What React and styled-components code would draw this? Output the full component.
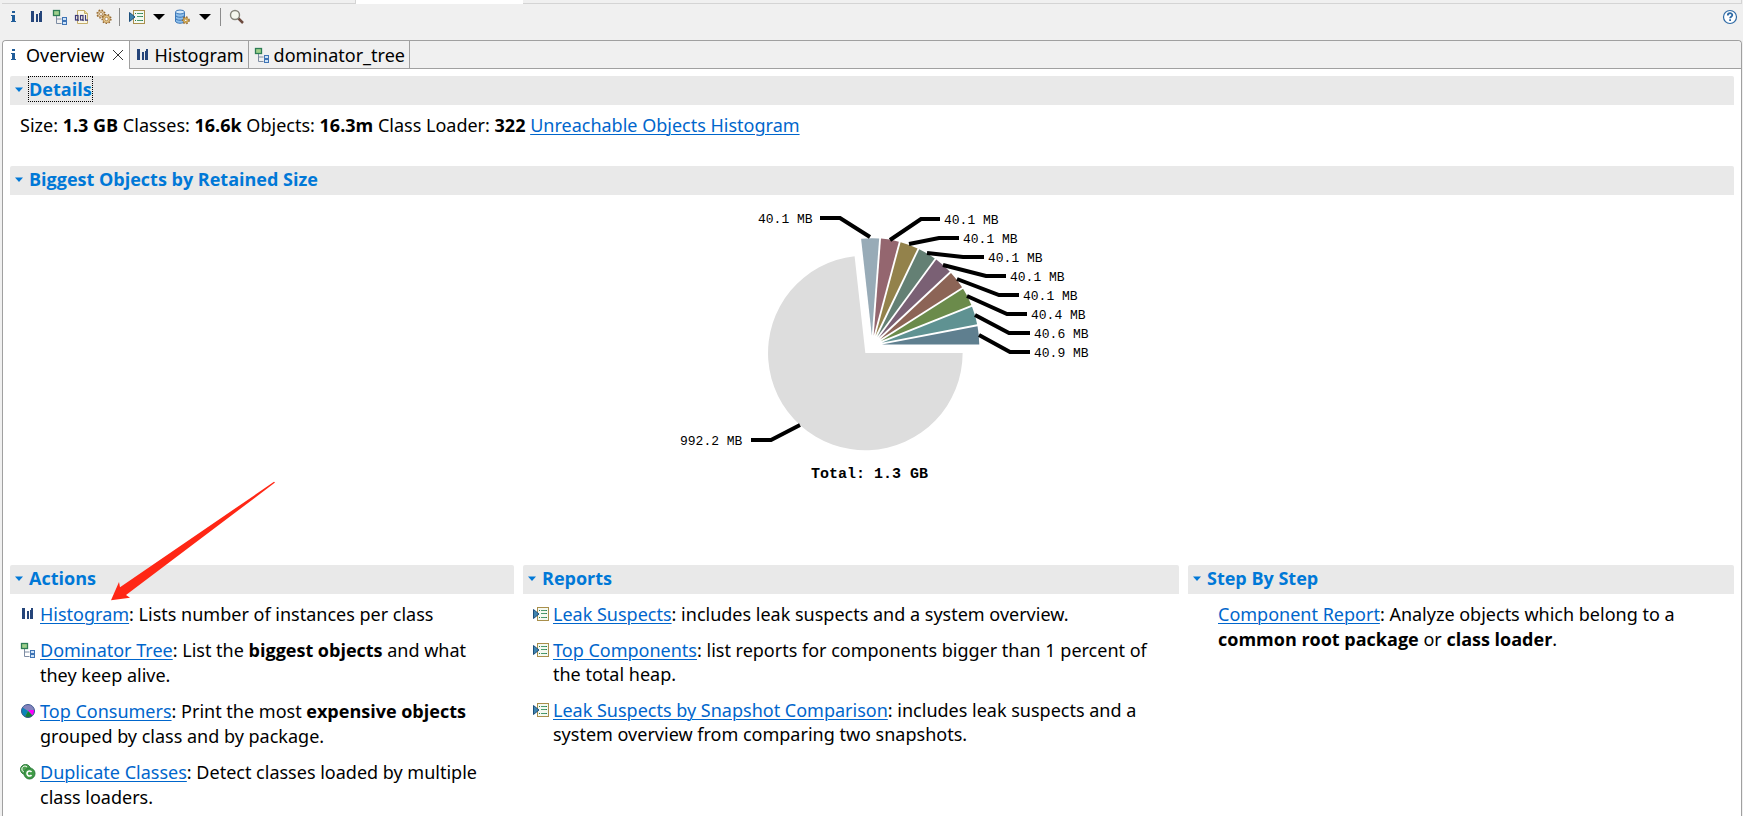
import React from 'react';
import styled, { createGlobalStyle } from 'styled-components';

const GlobalStyle = createGlobalStyle`
  * { box-sizing: border-box; }
  body { margin: 0; background: #f0f0f0; }
`;

const Workbench = styled.div`
  min-height: 100vh;
  display: flex;
  flex-direction: column;
  padding: 0 1px 0 2px;
  background: #f0f0f0;
  color: #000;
  font: 18px/24px "Noto Sans", "Open Sans", sans-serif;
`;

const EditorStrip = styled.div`
  display: grid;
  grid-template-columns: 354fr 167fr 1219fr;
  height: 4px;
`;

const StripTab = styled.div`
  background: ${(p) => (p.$active ? '#fff' : '#f0f0f0')};
  border: 0 solid #d4d4d4;
  border-width: ${(p) => (p.$active ? '0' : '0 1px 1px 0')};
`;

const Toolbar = styled.div`
  display: flex;
  align-items: center;
  height: 36px;
  padding: 0 3px 10px 2px;
`;

const ToolButton = styled.button`
  display: flex;
  align-items: center;
  justify-content: center;
  width: ${(p) => p.$width || 22}px;
  height: 22px;
  padding: 0;
  border: 0;
  background: none;
`;

const Separator = styled.span`
  width: 1px;
  height: 18px;
  margin: 0 6px 0 4px;
  background: #8c8c8c;
`;

const Spacer = styled.span`
  flex: 1;
`;

const Editor = styled.main`
  flex: 1;
  display: flex;
  flex-direction: column;
  border: 1px solid #a0a0a0;
  border-bottom: 0;
  border-radius: 4px 4px 0 0;
  background: #fff;
`;

const TabBar = styled.div`
  display: flex;
  height: 28px;
  border-radius: 4px 4px 0 0;
  background: #f0f0f0;
`;

const Tab = styled.button`
  display: flex;
  align-items: center;
  gap: 4px;
  padding: ${(p) => (p.$active ? '0 6px 0 3px' : '0 4px 0 5px')};
  border: 0 solid #a0a0a0;
  border-width: ${(p) => (p.$active ? '0 1px 0 0' : '0 1px 1px 0')};
  border-top-left-radius: ${(p) => (p.$active ? 4 : 0)}px;
  background: ${(p) => (p.$active ? '#fff' : '#f0f0f0')};
  color: #000;
  font: inherit;
`;

const CloseMark = styled.svg`
  margin-left: 4px;
`;

const TabFill = styled.div`
  flex: 1;
  border-bottom: 1px solid #a0a0a0;
`;

const Page = styled.div`
  padding: 7px 7px 0;
`;

const Section = styled.section`
  position: relative;
  min-width: 0;
  min-height: ${(p) => p.$minHeight || 0}px;
`;

const SectionHeader = styled.h2`
  display: flex;
  align-items: center;
  height: 29px;
  margin: 0;
  padding: 0 0 3px 5px;
  border-radius: 2px 2px 0 0;
  background: #e9e9e9;
  font: bold 18px/24px "Open Sans", sans-serif;
`;

const Toggle = styled.button`
  display: flex;
  align-items: center;
  gap: 6px;
  padding: 0;
  border: 0;
  background: none;
  color: #0078d7;
  font: inherit;
`;

const ToggleText = styled.span`
  outline: ${(p) => (p.$focused ? '1px dotted #000' : 'none')};
`;

const Summary = styled.p`
  margin: 0;
  padding: 8px 10px;
`;

const Strong = styled.b`
  font-family: "Open Sans", sans-serif;
`;

const Link = styled.a`
  color: #0066cc;
  text-decoration: underline;
  text-decoration-thickness: 1px;
  text-underline-offset: 2px;
`;

const ChartArea = styled.div`
  display: flex;
  justify-content: center;
`;

const Columns = styled.div`
  display: grid;
  grid-template-columns: 504fr 656fr 546fr;
  gap: 9px;
`;

const ItemList = styled.ul`
  display: grid;
  gap: ${(p) => 36 - p.$line}px;
  margin: 0;
  padding: 8px 16px 0 ${(p) => p.$indent}px;
  list-style: none;
  line-height: ${(p) => p.$line}px;
`;

const Item = styled.li`
  display: flex;
  gap: 4px;
`;

const ItemIcon = styled.span`
  flex: none;
  display: flex;
  align-items: center;
  width: 16px;
  height: 24px;
`;

const Arrow = styled.svg`
  position: absolute;
  left: 98px;
  top: -86px;
  pointer-events: none;
`;

const Icon = ({ children, size = 16 }) => (
  <svg width={size} height={size} viewBox="0 0 16 16" aria-hidden="true">{children}</svg>
);

const InfoIcon = () => (
  <Icon>
    <path d="M6 2h3v2H6zM5 6h4v6h1v1H5v-1h1V7H5z" fill="#1f5c99" />
  </Icon>
);

const BarsIcon = () => (
  <Icon>
    <path d="M2 2h3v11H2zM7 5h2v8H7zM10 4h1v9h-1zM11 2h2v11h-2z" fill="#25457a" />
  </Icon>
);

const TreeIcon = () => (
  <Icon>
    <path d="M4.500 7v7.500h5M4.500 10h5" fill="none" stroke="#7d8ca3" />
    <rect x="1.500" y="1.500" width="6" height="5" fill="#9fd08c" stroke="#2d7d55" strokeWidth="1.300" />
    <rect x="10.500" y="8.500" width="4" height="3" fill="#cfe3f7" stroke="#3f74b5" />
    <rect x="10.500" y="12.500" width="4" height="3" fill="#cfe3f7" stroke="#3f74b5" />
  </Icon>
);

const OqlIcon = () => (
  <Icon>
    <path d="M3.500 1.500h7l3 3v10h-10z" fill="#fbf8e8" stroke="#c5ae6b" />
    <path d="M10.500 1.500v3h3" fill="#ecd99a" stroke="#c5ae6b" />
    <g fill="none" stroke="#3d3a78" strokeWidth="1.200">
      <rect x="1.500" y="6.500" width="2.500" height="4.500" />
      <path d="M3 10l1.500 2" />
      <rect x="6.500" y="6.500" width="2.500" height="4.500" />
      <path d="M8 10l1.500 2M11.500 6v5.200h2.500" />
    </g>
  </Icon>
);

const Gear = ({ x, y, r, fill = '#e5bd72' }) => (
  <g transform={`translate(${x} ${y})`}>
    <circle r={r} fill="none" stroke="#94682f" strokeWidth="1.600" strokeDasharray="1.500 1.500" />
    <circle r={r - 0.6} fill={fill} stroke="#a87a3c" strokeWidth="0.700" />
    <circle r={r * 0.4} fill="#fff" stroke="#94682f" strokeWidth="0.700" />
  </g>
);

const GearsIcon = () => (
  <Icon>
    <Gear x={5} y={5} r={3.8} fill="#efdcbd" />
    <Gear x={10.5} y={10} r={4.3} fill="#ebcb8c" />
  </Icon>
);

const ReportIcon = () => (
  <Icon>
    <rect x="4.500" y="1.500" width="11" height="13" fill="#f4f9f1" stroke="#a98f4b" />
    <path d="M8 4.500h5M8 7.500h5M8 11.500h5" stroke="#4c9a6e" />
    <path d="M6 4.500h1M6 11.500h1M14 4.500h-1M14 7.500h-1M14 11.500h-1" stroke="#2d7d55" />
    <path d="M.5 3.500v9L6 8z" fill="#3e83ad" stroke="#1c4f7c" />
  </Icon>
);

const DatabaseIcon = () => (
  <Icon>
    <path d="M1.500 3v9c0 3 9 3 9 0V3" fill="#8fc0ec" stroke="#3c78b8" />
    <ellipse cx="6" cy="3" rx="4.500" ry="2" fill="#d5eafb" stroke="#3c78b8" />
    <path d="M1.500 6c0 3 9 3 9 0M1.500 9c0 3 9 3 9 0" fill="none" stroke="#3c78b8" />
    <Gear x={11.8} y={11.3} r={3.2} fill="#f4cf57" />
  </Icon>
);

const CaretIcon = () => (
  <svg width="12" height="6" viewBox="0 0 12 6" aria-hidden="true">
    <path d="M0 0h12L6 6z" fill="#000" />
  </svg>
);

const SearchIcon = () => (
  <Icon>
    <path d="M9 9l5 5" stroke="#6d4b3f" strokeWidth="2.500" />
    <circle cx="6" cy="6" r="4.500" fill="#f5f8ee" stroke="#85857a" strokeWidth="1.400" />
  </Icon>
);

const HelpIcon = () => (
  <Icon>
    <circle cx="8" cy="8" r="6.500" fill="#fff" stroke="#2e6aa5" strokeWidth="1.200" />
    <path d="M5.800 6.500C5.800 3.500 10.300 3.600 10.300 6c0 1.700-2.200 1.700-2.200 3.300M8.100 10.300v1.800" fill="none" stroke="#2e6aa5" strokeWidth="1.800" />
  </Icon>
);

const ConsumersIcon = () => (
  <Icon>
    <circle cx="8" cy="8" r="6.500" fill="#8583bd" />
    <path d="M8 8L2.500 4.500A6.500 6.500 0 0 0 5 13.800z" fill="#0b84b8" />
    <path d="M8 8l-3 5.800a6.500 6.500 0 0 0 7.600-1.200z" fill="#12803a" />
    <path d="M8 7h6.500a6.500 6.500 0 0 1-1.900 5.600z" fill="#f0f" />
    <circle cx="8" cy="8" r="6.500" fill="none" stroke="#3d5990" />
  </Icon>
);

const ClassesIcon = () => (
  <Icon>
    <circle cx="5.500" cy="5.500" r="5" fill="#4fa350" stroke="#2c7b3b" />
    <path d="M7 3a3 3 0 1 0-3 5" fill="none" stroke="#fff" />
    <circle cx="9.500" cy="9.500" r="5.500" fill="#3f9b46" stroke="#2c7b3b" />
    <path d="M11.500 8a2.500 2.500 0 1 0 0 3" fill="none" stroke="#fff" strokeWidth="1.600" />
  </Icon>
);

const CloseIcon = () => (
  <CloseMark width="10" height="10" viewBox="0 0 10 10" aria-hidden="true">
    <path d="M0 0l10 10M10 0L0 10" stroke="#333" />
  </CloseMark>
);

const TwistieIcon = () => (
  <svg width="8" height="5" viewBox="0 0 8 5" aria-hidden="true">
    <path d="M0 0.500h8L4 5z" fill="#0078d7" />
  </svg>
);

const slices = [
  { value: 40.9, color: '#5f7f8f', line: '979,335 1010,352 1030,352', x: 1034, y: 357 },
  { value: 40.6, color: '#5f9292', line: '975,315 1009,333 1030,333', x: 1034, y: 338 },
  { value: 40.4, color: '#6b8b4b', line: '967,296 1007,314 1027,314', x: 1031, y: 319 },
  { value: 40.1, color: '#8c6456', line: '957,279 999,295 1019,295', x: 1023, y: 300 },
  { value: 40.1, color: '#7a6074', line: '943,265 986,276 1006,276', x: 1010, y: 281 },
  { value: 40.1, color: '#648074', line: '927,253 963,257 984,257', x: 988, y: 262 },
  { value: 40.1, color: '#93824b', line: '909,244 939,238 959,238', x: 963, y: 243 },
  { value: 40.1, color: '#94666f', line: '890,240 921,219 940,219', x: 944, y: 224 },
  { value: 40.1, color: '#98abb7', line: '870,237 840,218 820,218', x: 758, y: 223 },
  { value: 992.2, color: '#dddddd', line: '800,425 771,440 751,440', x: 680, y: 445 },
];

const Label = styled.text`
  font: ${(p) => (p.$total ? 'bold 15px' : '13px')} "Liberation Mono", monospace;
`;

function PieChart() {
  const sum = slices.reduce((t, s) => t + s.value, 0);
  const radius = 97.3;
  let start = 0;
  const point = (cx, cy, a, r) => [cx + r * Math.cos(a), cy - r * Math.sin(a)];
  return (
    <svg width="450" height="300" viewBox="647 195 450 300" role="img" aria-label="Biggest objects by retained size">
      {slices.map((s, i) => {
        const end = start + (s.value / sum) * Math.PI * 2;
        const [cx, cy] = point(872, 345.5, (start + end) / 2, 10);
        const [x1, y1] = point(cx, cy, start, radius);
        const [x2, y2] = point(cx, cy, end, radius);
        const large = end - start > Math.PI ? 1 : 0;
        start = end;
        return <path key={i} d={`M${cx} ${cy}L${x1} ${y1}A${radius} ${radius} 0 ${large} 0 ${x2} ${y2}Z`} fill={s.color} />;
      })}
      {slices.map((s, i) => (
        <g key={i}>
          <polyline points={s.line} fill="none" stroke="#000" strokeWidth="4" />
          <Label x={s.x} y={s.y}>{s.value.toFixed(1)} MB</Label>
        </g>
      ))}
      <Label $total x="811" y="478">Total: 1.3 GB</Label>
    </svg>
  );
}

function Panel({ title, focused, minHeight, children }) {
  return (
    <Section $minHeight={minHeight}>
      <SectionHeader>
        <Toggle type="button" aria-expanded="true">
          <TwistieIcon />
          <ToggleText $focused={focused}>{title}</ToggleText>
        </Toggle>
      </SectionHeader>
      {children}
    </Section>
  );
}

function Entry({ icon, link, children }) {
  return (
    <Item>
      {icon && <ItemIcon>{icon}</ItemIcon>}
      <span><Link href="#">{link}</Link>: {children}</span>
    </Item>
  );
}

export default function App() {
  return (
    <Workbench>
      <GlobalStyle />
      <EditorStrip><StripTab /><StripTab $active /><StripTab /></EditorStrip>
      <Toolbar role="toolbar">
        <ToolButton $width={20} aria-label="Overview"><InfoIcon /></ToolButton>
        <ToolButton $width={25} aria-label="Histogram"><BarsIcon /></ToolButton>
        <ToolButton aria-label="Dominator tree"><TreeIcon /></ToolButton>
        <ToolButton aria-label="Query"><OqlIcon /></ToolButton>
        <ToolButton aria-label="Threads"><GearsIcon /></ToolButton>
        <Separator />
        <ToolButton aria-label="Run report"><ReportIcon /></ToolButton>
        <ToolButton aria-label="Report menu"><CaretIcon /></ToolButton>
        <ToolButton $width={24} aria-label="Query browser"><DatabaseIcon /></ToolButton>
        <ToolButton aria-label="Query menu"><CaretIcon /></ToolButton>
        <Separator />
        <ToolButton $width={20} aria-label="Find"><SearchIcon /></ToolButton>
        <Spacer />
        <ToolButton $width={18} aria-label="Help"><HelpIcon /></ToolButton>
      </Toolbar>
      <Editor>
        <TabBar role="tablist">
          <Tab role="tab" aria-selected="true" $active><InfoIcon />Overview<CloseIcon /></Tab>
          <Tab role="tab"><BarsIcon />Histogram</Tab>
          <Tab role="tab"><TreeIcon />dominator_tree</Tab>
          <TabFill />
        </TabBar>
        <Page>
          <Panel title="Details" focused minHeight={90}>
            <Summary>
              Size: <Strong>1.3 GB</Strong> Classes: <Strong>16.6k</Strong> Objects: <Strong>16.3m</Strong> Class Loader: <Strong>322</Strong>{' '}
              <Link href="#">Unreachable Objects Histogram</Link>
            </Summary>
          </Panel>
          <Panel title="Biggest Objects by Retained Size" minHeight={399}>
            <ChartArea><PieChart /></ChartArea>
          </Panel>
          <Columns>
            <Panel title="Actions">
              <ItemList $line={25} $indent={10}>
                <Entry icon={<BarsIcon />} link="Histogram">Lists number of instances per class</Entry>
                <Entry icon={<TreeIcon />} link="Dominator Tree">List the <Strong>biggest objects</Strong> and what they keep alive.</Entry>
                <Entry icon={<ConsumersIcon />} link="Top Consumers">Print the most <Strong>expensive objects</Strong> grouped by class and by package.</Entry>
                <Entry icon={<ClassesIcon />} link="Duplicate Classes">Detect classes loaded by multiple class loaders.</Entry>
              </ItemList>
              <Arrow width="170" height="124" viewBox="0 0 170 124" aria-hidden="true">
                <path d="M3 121.300L11 103L12 108.300L166 2.800L167 3.600L18 116L22 118.700z" fill="#ff2715" />
              </Arrow>
            </Panel>
            <Panel title="Reports">
              <ItemList $line={24} $indent={10}>
                <Entry icon={<ReportIcon />} link="Leak Suspects">includes leak suspects and a system overview.</Entry>
                <Entry icon={<ReportIcon />} link="Top Components">list reports for components bigger than 1 percent of the total heap.</Entry>
                <Entry icon={<ReportIcon />} link="Leak Suspects by Snapshot Comparison">includes leak suspects and a system overview from comparing two snapshots.</Entry>
              </ItemList>
            </Panel>
            <Panel title="Step By Step">
              <ItemList $line={25} $indent={30}>
                <Entry link="Component Report">Analyze objects which belong to a <Strong>common root package</Strong> or <Strong>class loader</Strong>.</Entry>
              </ItemList>
            </Panel>
          </Columns>
        </Page>
      </Editor>
    </Workbench>
  );
}
